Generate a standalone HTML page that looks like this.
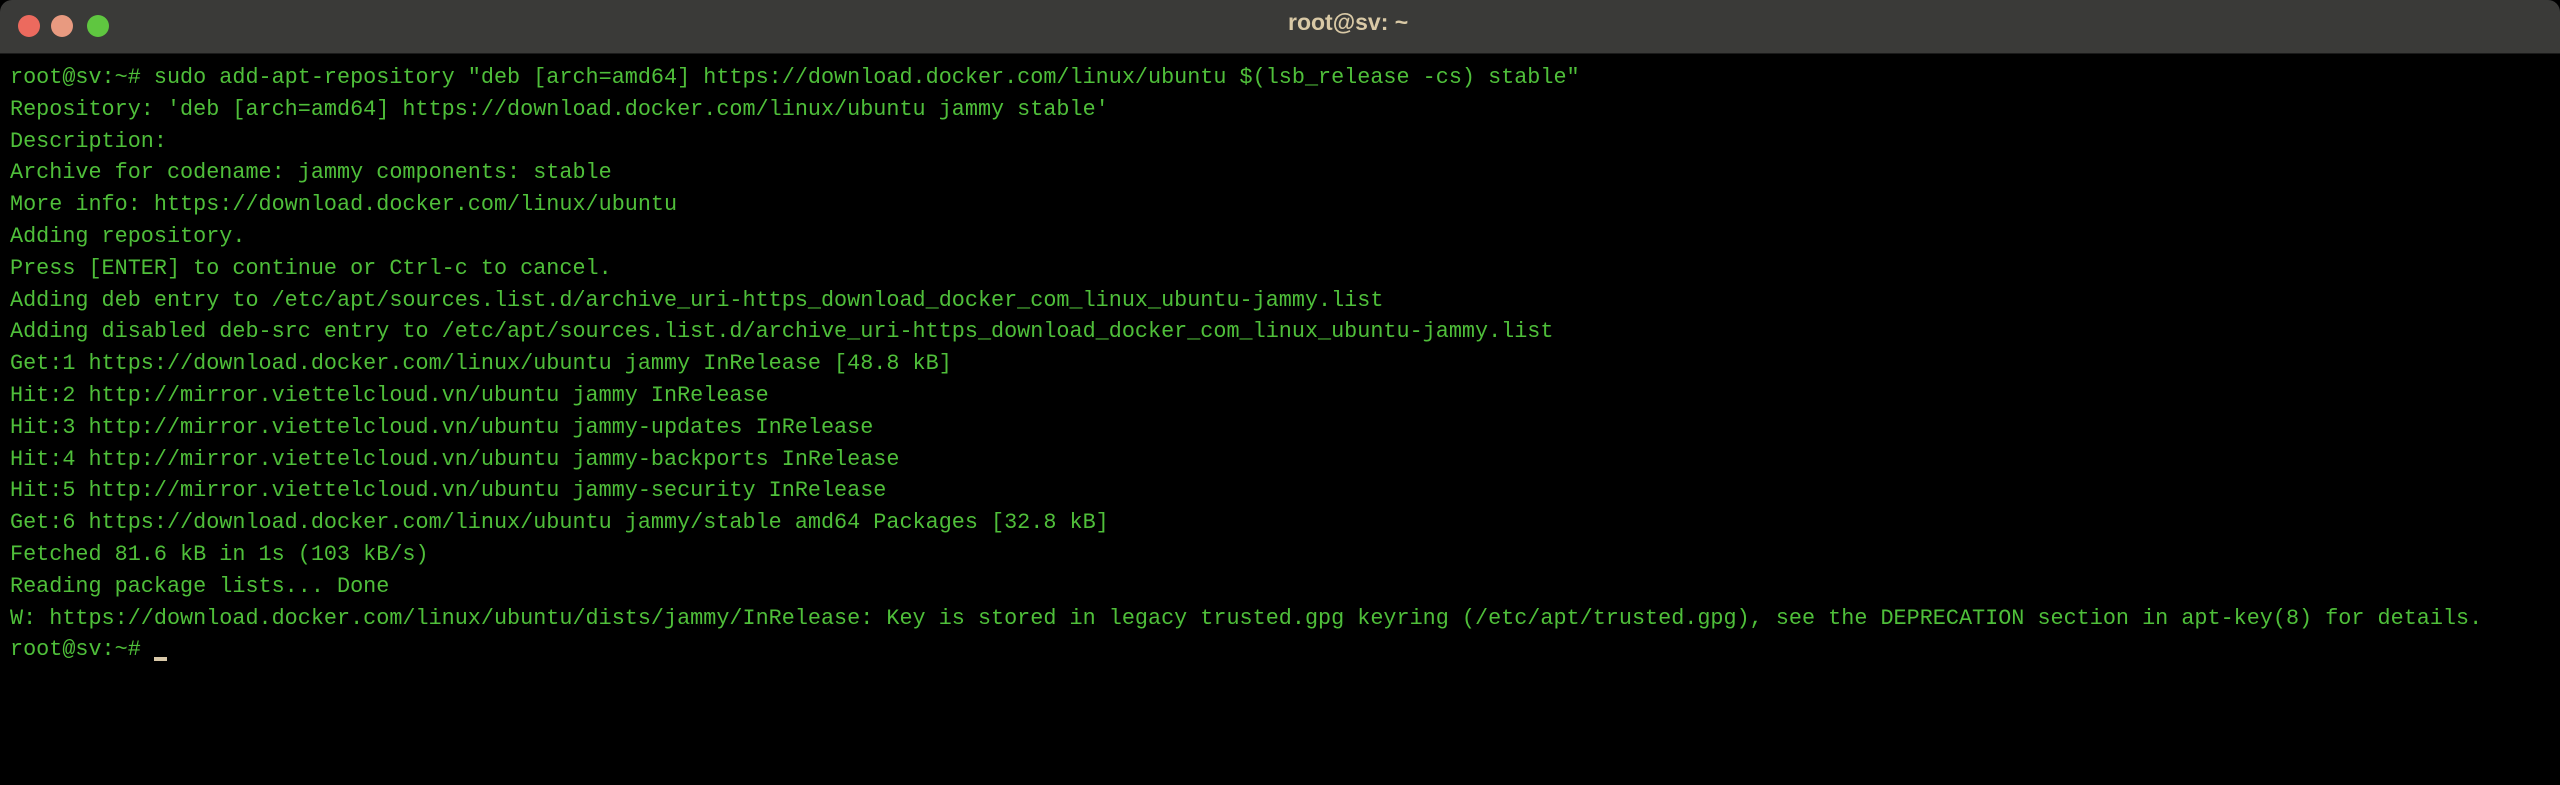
<!DOCTYPE html>
<html><head><meta charset="utf-8"><style>
html,body{margin:0;padding:0;width:2560px;height:785px;background:#000;overflow:hidden}
.bar{position:absolute;left:0;top:0;width:2560px;height:53px;background:#3a3a38;border-bottom:1px solid #1a1a1a;border-radius:12px 12px 0 0}
.dot{position:absolute;top:15px;width:22px;height:22px;border-radius:50%}
.title{position:absolute;left:1288px;top:9px;font:bold 23px "Liberation Sans",sans-serif;color:#d9c9a6}
pre{position:absolute;left:10px;top:62px;margin:0;font:21.8px/31.8px "Liberation Mono",monospace;color:#4fbf3a;white-space:pre}
.cur{display:inline-block;width:13px;height:4px;background:#d8c8a8;vertical-align:-6px}
</style></head><body>
<div class="bar">
<div class="dot" style="left:18px;background:#ec6a5e"></div>
<div class="dot" style="left:51px;background:#e89a80"></div>
<div class="dot" style="left:87px;background:#5fc640"></div>
<div class="title">root@sv: ~</div>
</div>
<pre>root@sv:~# sudo add-apt-repository "deb [arch=amd64] https://download.docker.com/linux/ubuntu $(lsb_release -cs) stable"
Repository: 'deb [arch=amd64] https://download.docker.com/linux/ubuntu jammy stable'
Description:
Archive for codename: jammy components: stable
More info: https://download.docker.com/linux/ubuntu
Adding repository.
Press [ENTER] to continue or Ctrl-c to cancel.
Adding deb entry to /etc/apt/sources.list.d/archive_uri-https_download_docker_com_linux_ubuntu-jammy.list
Adding disabled deb-src entry to /etc/apt/sources.list.d/archive_uri-https_download_docker_com_linux_ubuntu-jammy.list
Get:1 https://download.docker.com/linux/ubuntu jammy InRelease [48.8 kB]
Hit:2 http://mirror.viettelcloud.vn/ubuntu jammy InRelease
Hit:3 http://mirror.viettelcloud.vn/ubuntu jammy-updates InRelease
Hit:4 http://mirror.viettelcloud.vn/ubuntu jammy-backports InRelease
Hit:5 http://mirror.viettelcloud.vn/ubuntu jammy-security InRelease
Get:6 https://download.docker.com/linux/ubuntu jammy/stable amd64 Packages [32.8 kB]
Fetched 81.6 kB in 1s (103 kB/s)
Reading package lists... Done
W: https://download.docker.com/linux/ubuntu/dists/jammy/InRelease: Key is stored in legacy trusted.gpg keyring (/etc/apt/trusted.gpg), see the DEPRECATION section in apt-key(8) for details.
root@sv:~# <span class="cur"></span></pre>
</body></html>
